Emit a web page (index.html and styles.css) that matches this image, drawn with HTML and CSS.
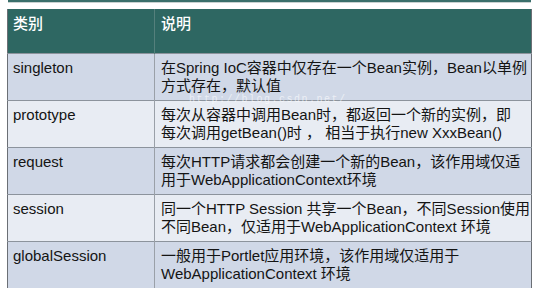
FILE: index.html
```html
<!DOCTYPE html>
<html>
<head>
<meta charset="utf-8">
<link rel="stylesheet" href="styles.css">
</head>
<body>
<div class="page">
  <div class="topbar"></div>
  <div class="wrap">
    <table class="scopes">
      <thead>
        <tr><th class="c1">类别</th><th class="c2">说明</th></tr>
      </thead>
      <tbody>
        <tr class="odd"><td class="c1">singleton</td><td class="c2"><span class="ln">在Spring IoC容器中仅存在一个Bean实例，Bean以单例</span><span class="ln">方式存在，默认值</span></td></tr>
        <tr class="even"><td class="c1">prototype</td><td class="c2"><span class="ln">每次从容器中调用Bean时，都返回一个新的实例，即</span><span class="ln">每次调用getBean()时 ， 相当于执行new XxxBean()</span></td></tr>
        <tr class="odd"><td class="c1">request</td><td class="c2"><span class="ln">每次HTTP请求都会创建一个新的Bean，该作用域仅适</span><span class="ln">用于WebApplicationContext环境</span></td></tr>
        <tr class="even"><td class="c1">session</td><td class="c2"><span class="ln">同一个HTTP Session 共享一个Bean，不同Session使用</span><span class="ln">不同Bean，仅适用于WebApplicationContext 环境</span></td></tr>
        <tr class="odd last"><td class="c1">globalSession</td><td class="c2"><span class="ln">一般用于Portlet应用环境，该作用域仅适用于</span><span class="ln">WebApplicationContext 环境</span></td></tr>
      </tbody>
    </table>
    <div class="watermark">http://blog.csdn.net/</div>
  </div>
</div>
</body>
</html>
```
FILE: styles.css
```css
html, body {
  margin: 0;
  padding: 0;
  background: #ffffff;
}
body {
  width: 540px;
  height: 288px;
  overflow: hidden;
  font-family: "Liberation Sans", "Noto Sans CJK SC", sans-serif;
  color: #141414;
}
.page {
  padding: 0 8px 0 7px;
}
.topbar {
  height: 2px;
  background: #3a6f6b;
  border-bottom: 1px solid #c9d2d1;
  margin: 0 1px 0 1px;
}
.wrap {
  position: relative;
  margin-top: 6px;
}
.scopes {
  width: 525px;
  border-collapse: collapse;
  table-layout: fixed;
  border-left: 1px solid #6b6f75;
  border-right: 1px solid #6b6f75;
}
.scopes th, .scopes td {
  text-align: left;
  vertical-align: top;
  padding: 5px 0 0 6px;
  font-size: 15px;
  line-height: 18px;
  font-weight: normal;
}
.scopes th.c1, .scopes td.c1 {
  width: 141px;
  border-right: 1px solid #9aa0a8;
  padding-left: 5px;
}
.scopes thead tr {
  background: #2e6762;
  height: 44px;
}
.scopes th {
  color: #ffffff;
  padding-top: 6px;
  font-weight: 500;
}
.scopes th.c1 {
  border-right: 1px solid #55807c;
}
.scopes tbody tr {
  height: 47px;
  border-top: 1px solid #8c939c;
}
.scopes tbody tr.odd {
  background: #d0d8e7;
}
.scopes tbody tr.even {
  background: #e8ecf3;
}
.scopes tbody tr.last {
  height: 48px;
}
.ln {
  display: block;
  white-space: nowrap;
}
.watermark {
  position: absolute;
  left: 182px;
  top: 87px;
  font-family: "Liberation Mono", monospace;
  font-size: 10px;
  line-height: 8px;
  color: rgba(255, 255, 255, 0.6);
  letter-spacing: 1.5px;
}
```
